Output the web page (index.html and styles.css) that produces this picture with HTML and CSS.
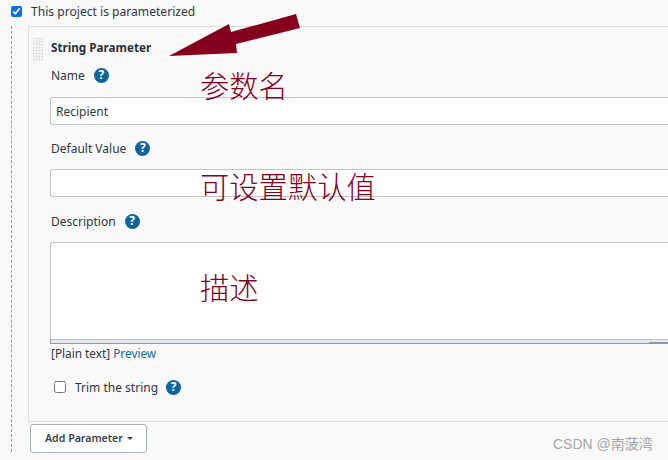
FILE: index.html
```html
<!DOCTYPE html>
<html lang="zh">
<head>
<meta charset="utf-8">
<title>String Parameter</title>
<link rel="stylesheet" href="styles.css">
</head>
<body>
<main class="page">
  <label class="project-row">
    <input class="check" type="checkbox" checked>
    <span>This project is parameterized</span>
  </label>
  <div class="nested">
    <section class="card">
      <div class="handle"></div>
      <h2 class="card-title">String Parameter</h2>
      <div class="field-label name-label"><span>Name</span><span class="help">?</span></div>
      <input class="text-input" type="text" value="Recipient">
      <div class="field-label default-label"><span>Default Value</span><span class="help">?</span></div>
      <input class="text-input" type="text">
      <div class="field-label desc-label"><span>Description</span><span class="help">?</span></div>
      <div class="textarea"></div>
      <div class="grip"></div>
      <div class="format-row">[Plain text] <a class="link">Preview</a></div>
      <label class="trim-row">
        <input class="check-off" type="checkbox">
        <span>Trim the string</span>
        <span class="help">?</span>
      </label>
    </section>
    <button class="add-btn" type="button">Add Parameter<span class="caret"></span></button>
  </div>
</main>
<svg class="arrow" width="668" height="60" viewBox="0 0 668 60" aria-hidden="true">
  <polygon points="169,56 229,24 231,32 296,14 300,28 236,44 237,53" fill="#84001c"/>
</svg>
<div class="note note-name">参数名</div>
<div class="note note-default">可设置默认值</div>
<div class="note note-desc">描述</div>
<div class="watermark">CSDN @南菠湾</div>
</body>
</html>
```
FILE: styles.css
```css
* { box-sizing: border-box; }
html, body { margin: 0; height: 100%; }
body {
  width: 668px;
  height: 460px;
  overflow: hidden;
  position: relative;
  background: #f9f9f9;
  color: #333;
  font-family: "Noto Sans", "Open Sans", sans-serif;
  font-size: 12px;
}
.page { padding: 4px 0 0 11px; }
.project-row {
  display: flex;
  align-items: center;
  gap: 9px;
  height: 15px;
  font-size: 12.1px;
  color: #2f3640;
}
.check { margin: 0; width: 11px; height: 11px; accent-color: #0b6fe0; }
.nested {
  margin-top: 7px;
  padding-left: 16px;
  height: 426px;
  border-left: 1px dashed #9a9a9a;
}
.card {
  position: relative;
  height: 396px;
  padding: 12px 0 0 21px;
  border: 1px solid #dcdcdc;
  border-right: 0;
  background: #f9f9f9;
}
.handle {
  position: absolute;
  left: 4px;
  top: 11px;
  width: 10px;
  height: 23px;
  background-image:
    linear-gradient(#e2e2e2 1px, transparent 1px),
    linear-gradient(90deg, #e2e2e2 1px, transparent 1px);
  background-size: 3px 3px;
}
.card-title {
  margin: 0;
  padding-left: 1px;
  font-size: 11.7px;
  line-height: 16px;
  font-weight: 700;
  color: #2a2f36;
}
.field-label {
  display: flex;
  align-items: center;
  gap: 9px;
  height: 16px;
  padding-left: 1px;
  color: #2f3640;
}
.name-label { margin-top: 12px; }
.default-label { margin-top: 15px; }
.desc-label { margin-top: 16px; }
.help {
  display: inline-flex;
  justify-content: center;
  align-items: center;
  width: 15px;
  height: 15px;
  border-radius: 50%;
  background: #0f6499;
  color: #fff;
  font-size: 12px;
  font-weight: 700;
  line-height: 1;
}
.text-input {
  display: block;
  width: 100%;
  height: 28px;
  margin-top: 14px;
  padding: 0 5px;
  border: 1px solid #c3c3c3;
  border-right: 0;
  border-radius: 3px 0 0 3px;
  background: #fff;
  color: #2f3640;
  font: 12px "Noto Sans", sans-serif;
  outline: 0;
}
.default-label + .text-input { margin-top: 13px; }
.textarea {
  height: 97px;
  margin-top: 13px;
  border: 1px solid #c3c3c3;
  border-right: 0;
  border-bottom: 0;
  border-radius: 3px 0 0 0;
  background: #fff;
}
.grip {
  height: 5px;
  background:
    linear-gradient(#8f9a9f, #8f9a9f) right 2px / 19px 1px no-repeat,
    #e3e9ec;
  border-top: 1px solid #b7c0c4;
  border-left: 1px solid #8f9a9f;
  border-bottom: 1px solid #8f9a9f;
}
.format-row {
  margin-top: 1px;
  padding-left: 1px;
  font-size: 11.8px;
  line-height: 16px;
  color: #2f3640;
}
.link { color: #0f6ca8; }
.trim-row {
  display: flex;
  align-items: center;
  height: 16px;
  margin-top: 18px;
  padding-left: 4px;
  color: #2f3640;
}
.check-off {
  margin: 0 9px 0 0;
  width: 12px;
  height: 12px;
}
.trim-row .help { margin-left: 8px; }
.add-btn {
  display: flex;
  align-items: center;
  height: 29px;
  width: 117px;
  margin: 2px 0 0 2px;
  padding: 0 0 1px 14px;
  background: #fff;
  border: 1px solid #a9b3bb;
  border-radius: 3px;
  color: #39424a;
  font: 600 10.6px "Noto Sans", sans-serif;
}
.caret {
  margin-left: 4px;
  border-left: 3px solid transparent;
  border-right: 3px solid transparent;
  border-top: 3px solid #39424a;
}
.arrow { position: absolute; left: 0; top: 0; }
.note {
  position: absolute;
  left: 200px;
  color: #84001c;
  font: 300 29.3px/38px "Noto Sans CJK SC", sans-serif;
}
.note-name { top: 65px; }
.note-default { top: 166px; }
.note-desc { top: 267px; }
.watermark {
  position: absolute;
  left: 553px;
  top: 435px;
  color: #a5a5a5;
  font: 14px/18px "Liberation Sans", "Noto Sans CJK SC", sans-serif;
}
```
